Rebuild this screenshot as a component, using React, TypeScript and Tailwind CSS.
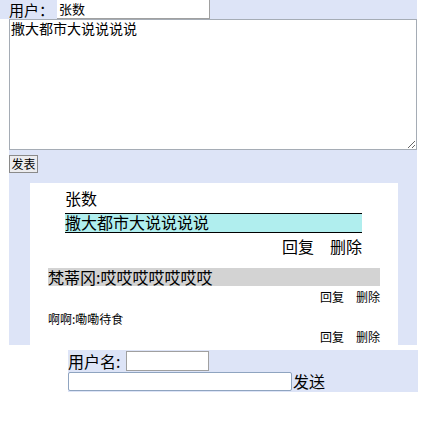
import React from "react";

const cjk = "font-['Noto_Sans_CJK_SC','Liberation_Sans',sans-serif]";

// 留言条目的操作链接
function Actions({ big }: { big?: boolean }) {
  return (
    <div className={big ? "flex justify-end gap-[16px] text-[16px] leading-[20px]" : "flex justify-end gap-[12px] text-[12px] leading-[13px]"}>
      <span>回复</span>
      <span>删除</span>
    </div>
  );
}

export default function App() {
  return (
    <div className={`${cjk} h-[433px] w-[429px] overflow-hidden bg-white text-black`}>
      {/* 顶部：用户名 */}
      <div className="flex h-[19px] w-[417px] items-center bg-[#dde4f7] pl-[9px]">
        <span className="w-[48px] shrink-0 whitespace-nowrap text-[15px] leading-[19px]">用户：</span>
        <div className="h-[19px] w-[153px] shrink-0 self-start border-r border-b border-[#a0a0a0] bg-white pl-[2px] text-[13px] leading-[18px]">
          张数
        </div>
      </div>

      <div className="ml-[9px] w-[408px] bg-[#dde4f7]">
        {/* 输入框 */}
        <textarea
          className="block h-[131px] w-[408px] resize border border-[#a5acb5] bg-white px-[1px] text-[14px] leading-[16px] outline-none"
          defaultValue="撒大都市大说说说说"
        />
        <button
          type="button"
          className="mt-[5px] block h-[18px] w-[29px] border border-[#8a8a8a] bg-[#ececef] text-[12px] leading-[14px]"
        >
          发表
        </button>

        {/* 留言列表 */}
        <div className="mt-[10px] ml-[21px] h-[162px] w-[368px] bg-white">
          <div className="pt-[6px] pl-[35px]">
            <div className="text-[16px] leading-[18px]">张数</div>
            <div className="mt-[6px] h-[20px] w-[297px] border-y border-black bg-[#b0eeee] text-[16px] leading-[17px]">
              撒大都市大说说说说
            </div>
            <div className="mt-[3px] w-[297px]">
              <Actions big />
            </div>
          </div>
          <div className="mt-[12px] ml-[18px] w-[332px]">
            <div className="h-[18px] bg-[#d3d3d3] text-[16px] leading-[18px]">梵蒂冈:哎哎哎哎哎哎哎</div>
            <div className="mt-[4px]">
              <Actions />
            </div>
            <div className="mt-[9px] text-[12px] leading-[13px]">啊啊:嘞嘞待食</div>
            <div className="mt-[5px]">
              <Actions />
            </div>
          </div>
        </div>
      </div>

      {/* 底部：回复表单 */}
      <div className="mt-[5px] ml-[68px] w-[350px] bg-[#dde4f7] pt-[1px] pb-[1px]">
        <div className="flex h-[20px] items-center">
          <span className="w-[58px] text-[16px] leading-[20px]">用户名:</span>
          <div className="h-[20px] w-[83px] border border-[#a0a0a0] bg-white" />
        </div>
        <div className="flex h-[20px] items-center">
          <div className="h-[19px] w-[224px] rounded-[2px] border border-[#8fa4c0] bg-white" />
          <span className="ml-[1px] text-[16px] leading-[20px]">发送</span>
        </div>
      </div>
    </div>
  );
}
